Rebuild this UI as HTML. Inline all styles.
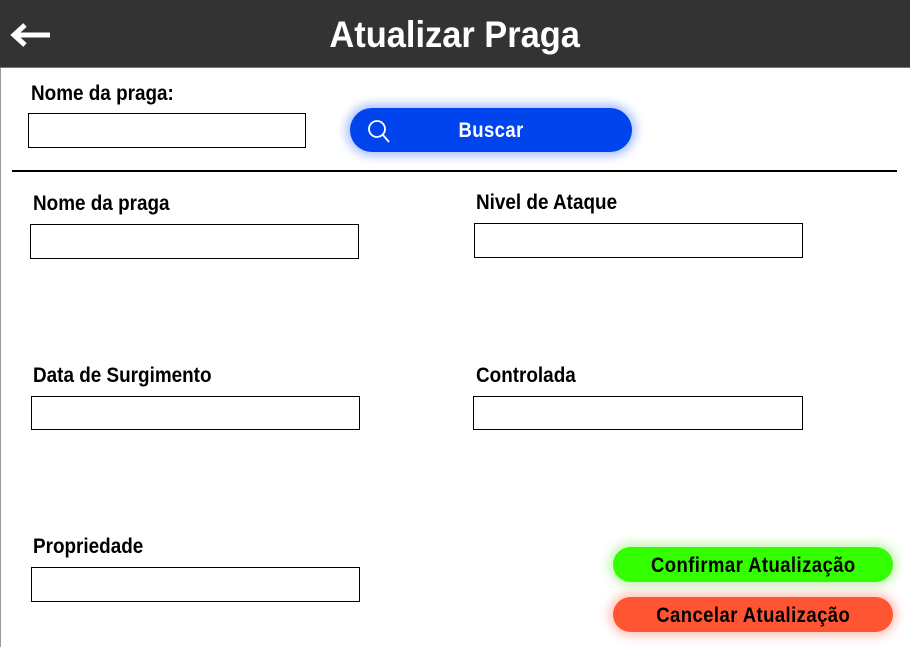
<!DOCTYPE html>
<html><head><style>
*{margin:0;padding:0;box-sizing:border-box}
body{width:910px;height:647px;background:#fff;position:relative;overflow:hidden;font-family:"Liberation Sans",sans-serif;font-weight:bold}
.hdr{position:absolute;left:0;top:0;width:910px;height:68px;background:#333;border-bottom:1px solid #777}
.title{position:absolute;left:0;width:910px;top:14px;text-align:center;color:#fff;font-size:37px}
.title span{display:inline-block;transform:scaleX(0.93)}
.btn span{display:inline-block;transform:scaleX(0.88)}
.lbl{position:absolute;font-size:21px;color:#000;white-space:nowrap;transform:scaleX(0.9);transform-origin:left}
.in{position:absolute;border:1.5px solid #000;background:#fff}
.btn{position:absolute;border-radius:18px;text-align:center;font-size:21px;letter-spacing:0.5px;white-space:nowrap}
</style></head><body>
<div style="position:absolute;left:0;top:68px;width:1px;height:579px;background:#999"></div>
<div class="hdr">
<svg style="position:absolute;left:10px;top:22px" width="42" height="26" viewBox="0 0 42 26"><path d="M40 13H8" stroke="#fff" stroke-width="5"/><path d="M15 3L4 13L15 23" stroke="#fff" stroke-width="5" fill="none"/></svg>
<div class="title"><span>Atualizar Praga</span></div>
</div>
<div class="lbl" style="left:31px;top:82px">Nome da praga:</div>
<div class="in" style="left:28px;top:113px;width:278px;height:35px"></div>
<div class="btn" style="left:350px;top:108px;width:282px;height:44px;background:#0044ee;border-radius:22px;color:#fff;line-height:46px;box-shadow:0 0 10px 4px #a9c0ff"><span>Buscar</span>
<svg style="position:absolute;left:15px;top:10px" width="28" height="28" viewBox="0 0 28 28"><circle cx="12" cy="11" r="8" stroke="#fff" stroke-width="1.8" fill="none"/><path d="M18 17L24 24" stroke="#fff" stroke-width="1.8"/></svg></div>
<div style="position:absolute;left:12px;top:170px;width:885px;height:1.5px;background:#000"></div>
<div class="lbl" style="left:33px;top:192px">Nome da praga</div>
<div class="in" style="left:30px;top:224px;width:329px;height:35px"></div>
<div class="lbl" style="left:476px;top:191px">Nivel de Ataque</div>
<div class="in" style="left:474px;top:223px;width:329px;height:35px"></div>
<div class="lbl" style="left:33px;top:364px">Data de Surgimento</div>
<div class="in" style="left:31px;top:396px;width:329px;height:34px"></div>
<div class="lbl" style="left:476px;top:364px">Controlada</div>
<div class="in" style="left:473px;top:396px;width:330px;height:34px"></div>
<div class="lbl" style="left:33px;top:535px">Propriedade</div>
<div class="in" style="left:31px;top:567px;width:329px;height:35px"></div>
<div class="btn" style="left:613px;top:547px;width:280px;height:35px;line-height:37px;background:#33ff00;box-shadow:0 0 10px 4px #c4f5b4"><span>Confirmar Atualização</span></div>
<div class="btn" style="left:613px;top:597px;width:280px;height:35px;line-height:37px;background:#ff5533;box-shadow:0 0 10px 4px #ffc4b8"><span>Cancelar Atualização</span></div>
</body></html>
